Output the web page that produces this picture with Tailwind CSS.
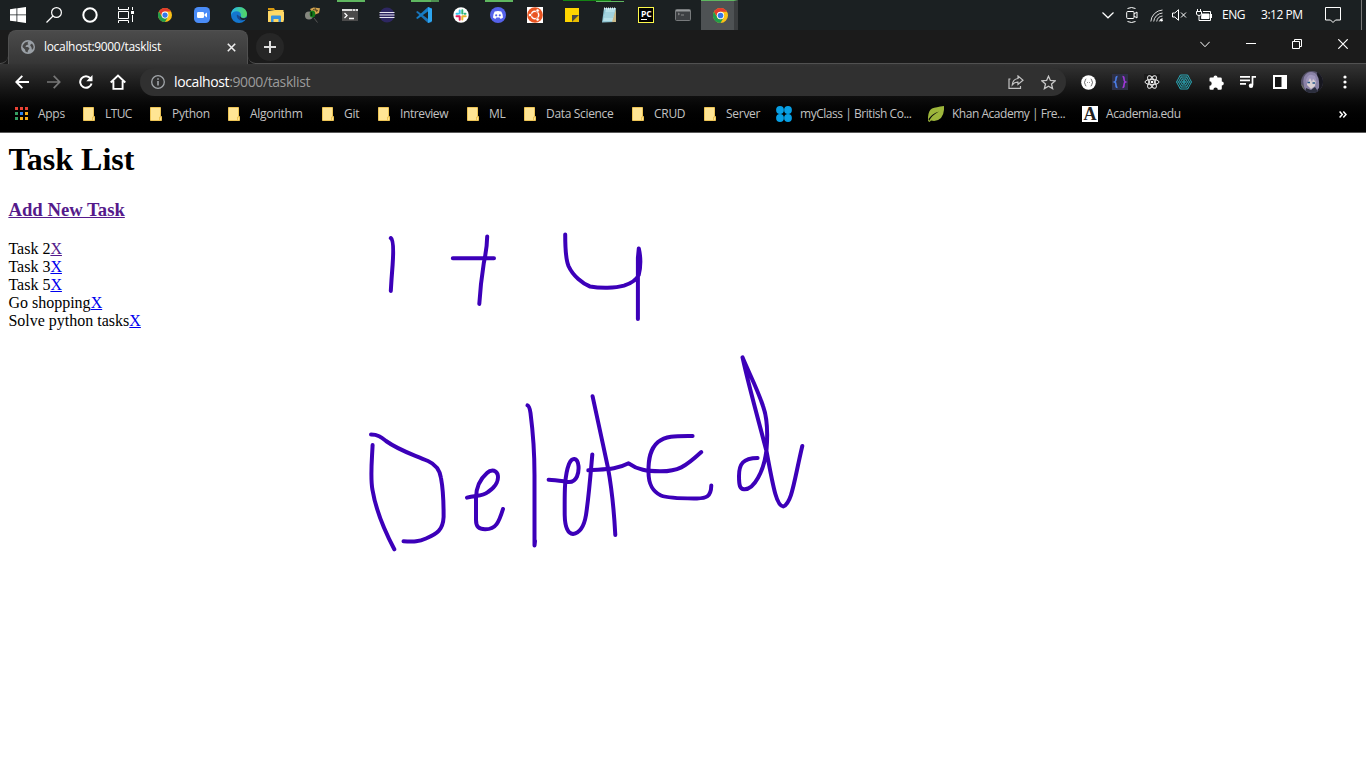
<!DOCTYPE html>
<html lang="en">
<head>
<meta charset="utf-8">
<title>Task List</title>
<script src="https://cdn.jsdelivr.net/npm/@tailwindcss/browser@4"></script>
</head>
<body class="relative flex h-[768px] w-[1366px] flex-col overflow-hidden bg-white font-['Open_Sans',sans-serif] text-xs text-white">

<svg class="hidden">
  <symbol id="folder" viewBox="0 0 12 14"><path d="M.5.500h10V9.500h1v4H.5z" fill="#ffe594" stroke="#edc455"/><path d="M9.500 13v-3h1.500" fill="none" stroke="#edc455"/></symbol>
  <symbol id="chrome" viewBox="0 0 16 16"><circle cx="8" cy="8" r="8" fill="#fbc116"/><path d="M1.070 4A8 8 0 0 1 14.930 4H8A4 4 0 0 0 4.540 10z" fill="#e33b2e"/><path d="M1.070 4A8 8 0 0 0 8 16L11.460 10A4 4 0 0 1 4.540 10z" fill="#219b4b"/><circle cx="8" cy="8" r="3.900" fill="#fff"/><circle cx="8" cy="8" r="3" fill="#3577e8"/></symbol>
</svg>

<!-- Taskbar -->
<header class="flex h-[30px] shrink-0 items-center bg-[#1b2022]">
  <div class="flex w-9 justify-center"><svg width="16" height="16" viewBox="0 0 16 16" fill="#fff"><path d="M0 2.2 6.5 1.3V7.500H0zM7.300 1.200 16 0V7.500H7.300zM0 8.300H6.500V14.600L0 13.700zM7.300 8.300H16V16L7.300 14.800z"/></svg></div>
  <div class="flex w-9 justify-center"><svg width="16" height="16" viewBox="0 0 16 16" fill="none" stroke="#fff" stroke-width="1.2"><circle cx="10.500" cy="5.500" r="4.900"/><path d="M7 9 .5 15.500"/></svg></div>
  <div class="flex w-9 justify-center"><svg width="16" height="16" viewBox="0 0 16 16" fill="none" stroke="#fff" stroke-width="2"><circle cx="8" cy="8" r="6.700"/></svg></div>
  <div class="flex w-9 justify-center"><svg width="16" height="16" viewBox="0 0 16 16" fill="none" stroke="#fff" stroke-width="1"><path d="M.5 0V2.500H10.500V0M.5 16V13.500H10.500V16M.5 4.500H10.500V11.500H.5zM14.500 0V3M14.500 8V15"/><path d="M13 4h3v3h-3z" fill="#fff" stroke="none"/></svg></div>

  <div class="ml-[2.5px] flex w-[37px] justify-center"><svg width="14" height="14"><use href="#chrome"/></svg></div>
  <div class="flex w-[37px] justify-center"><svg width="16" height="16" viewBox="0 0 16 16"><rect width="16" height="16" rx="4.500" fill="#4a8cf7"/><rect x="3" y="5" width="7" height="6" rx="1.300" fill="#fff"/><path d="M10.500 7.300 13 5.500v5L10.500 8.700z" fill="#fff"/></svg></div>
  <div class="flex w-[37px] justify-center"><svg width="16" height="16" viewBox="0 0 16 16"><defs><linearGradient id="edge" x1="0" x2="1"><stop stop-color="#25b5ee"/><stop offset="1" stop-color="#55d95a"/></linearGradient></defs><circle cx="8" cy="8" r="8" fill="#1477cf"/><path d="M0 8C0 3.500 3.500 0 8 0s8 3.300 8 7-3 4.300-5 3.800-1.200-1.300-1-2.800C10 6 8 4.300 5.500 4.300S.8 5.800 0 8z" fill="url(#edge)"/><path d="M6 7.500C5 10 7.500 14 12 13.500L14.500 12C11 13 8.500 11.500 9 9.500z" fill="#174a91"/><path d="M10 8.500c-.7 1.200-.4 2 1 2.500s3.500.3 4.500-1V12l-1.500.8c-3 .6-5.300-.8-5-2.800z" fill="#1b2022"/></svg></div>
  <div class="flex w-[37px] justify-center"><svg width="16" height="14" viewBox="0 0 16 14"><path d="M0 0h6l1 2H0z" fill="#d99a10"/><path d="M0 3 7 2h8.500v12H0z" fill="#ffd55c"/><path d="M0 4h16v8.500H0z" fill="#ffd968"/><path d="M3 14V8.500Q3 7.500 4 7.500h8q1 0 1 1V14h-2.500v-3h-5v3z" fill="#3a93dd"/></svg></div>
  <div class="flex w-[37px] justify-center"><svg width="16" height="16" viewBox="0 0 16 16"><circle cx="4" cy="8.500" r="4" fill="#85877f"/><path d="M5 2 8.500.5l6.500.8-1 4.700-5 2z" fill="#d4a44f"/><path d="m8 2.500 5 1M10 1l2 4" stroke="#46371a" stroke-width=".8"/><ellipse cx="7.500" cy="7" rx="2.800" ry="3.600" fill="#147a1b"/><path d="M6.500 5v4" stroke="#082f0b" stroke-width="1.500"/><path d="m9 11 3.500 4.500" stroke="#555"/></svg></div>
  <div class="relative flex w-[37px] justify-center"><i class="absolute -top-[9px] left-[5px] h-[2px] w-7 bg-[#5fb760]"></i><svg width="16" height="12" viewBox="0 0 16 12"><path d="M0 0h16v12H0z" fill="#4b4b4b"/><path d="M0 0h16v2H0z" fill="#ddd"/><path d="M10 0h1v2h-1zM13 0h1v2h-1z" fill="#888"/><path d="m2.500 4 2.500 2.500L2.500 9M7 9.500h5" fill="none" stroke="#fff" stroke-width="1.300"/></svg></div>
  <div class="flex w-[37px] justify-center"><svg width="16" height="16" viewBox="0 0 16 16"><circle cx="8" cy="8" r="7.500" fill="#2e2762"/><path d="M.5 5.500h15M.5 8h15M.5 10.500h15" stroke="#e8e6f2" stroke-width="1.100"/></svg></div>
  <div class="relative flex w-[37px] justify-center"><i class="absolute -top-[7px] left-[5px] h-[2px] w-7 border-r-8 border-[#4d8f50] bg-[#5fb760]"></i><svg width="16" height="16" viewBox="0 0 16 16"><path d="M0 5 1.500 4 16 15l-4 1z" fill="#1a73b8"/><path d="M0 11 12 0l4 1.500L1.500 12z" fill="#167cc5"/><path d="m12 0 4 1.800v12.400L12 16z" fill="#2da5ef"/></svg></div>
  <div class="flex w-[37px] justify-center"><svg width="16" height="16" viewBox="0 0 16 16" fill="none" stroke-linecap="round" stroke-width="2"><circle cx="8" cy="8" r="7.700" fill="#fff"/><path d="M6.700 3.500v3M3.500 6.700h1.500" stroke="#36c5f0"/><path d="M9.300 3.200v3.300M11.500 6.700h1" stroke="#2eb67d"/><path d="M9.300 9.500v3M9.500 9.300h3.200" stroke="#ecb22e"/><path d="M6.700 9.500v3.200M3.500 9.300h3" stroke="#e01e5a"/></svg></div>
  <div class="relative flex w-[37px] justify-center"><i class="absolute -top-[7px] left-[5px] h-[2px] w-7 bg-[#5fb760]"></i><svg width="16" height="16" viewBox="0 0 16 16"><circle cx="8" cy="8" r="8" fill="#5562ea"/><path d="M4.700 4.500Q8 3.500 11.300 4.500 13 7 13 10.500q-1.200 1.200-2.700 1.300l-.7-1.200H6.400l-.7 1.200Q4.200 11.700 3 10.500 3 7 4.700 4.500z" fill="#fff"/><circle cx="6.200" cy="8.300" r="1.100" fill="#5562ea"/><circle cx="9.800" cy="8.300" r="1.100" fill="#5562ea"/></svg></div>
  <div class="flex w-[37px] justify-center"><svg width="16" height="16" viewBox="0 0 16 16"><path d="M0 0h16v16H0z" fill="#fff"/><circle cx="8" cy="8" r="7.800" fill="#e95420"/><circle cx="8" cy="8" r="3.700" fill="none" stroke="#fff" stroke-width="1.500"/><g fill="#fff" stroke="#e95420" stroke-width=".7"><circle cx="3" cy="8" r="1.700"/><circle cx="10.600" cy="3.500" r="1.700"/><circle cx="10.600" cy="12.500" r="1.700"/></g></svg></div>
  <div class="relative flex w-[37px] justify-center"><i class="absolute -top-2 left-[9.5px] h-px w-12 bg-[#148314]"></i><svg width="14" height="14" viewBox="0 0 14 14"><path d="M0 0h14v7l-7 7H0z" fill="#ffd500"/><path d="M7 7h7l-7 7z" fill="#4a4a45"/><path d="M14 7v7H7z" fill="#e9bd00"/></svg></div>
  <div class="relative flex w-[37px] justify-center"><i class="absolute -top-[6px] left-[5px] h-px w-7 bg-[#5fb760]"></i><svg width="16" height="16" viewBox="0 0 16 16"><path d="M3 1h12l-1 14-13 .5z" fill="#8fc5d3"/><path d="M5 2h9l-2 12H2z" fill="#b6e0e8"/><path d="M15 2v13h-4z" fill="#c9b887"/><path d="M3 1.500h12" stroke="#e8f1f3" stroke-width="2" stroke-dasharray="1 1"/><path d="M4 6h9M4 8h9M3 10h9" stroke="#7bb7c7" stroke-width=".6"/></svg></div>
  <div class="flex w-[37px] justify-center"><div class="flex h-4 w-4 flex-col border border-[#fcf84a] bg-black pt-[2px] pl-[2px] text-[8.5px] leading-[7px] font-bold">PC<i class="mt-[2px] h-px w-[6px] bg-white"></i></div></div>
  <div class="flex w-[37px] justify-center"><svg width="16" height="12" viewBox="0 0 16 12"><rect x=".5" y=".5" width="15" height="11" rx="1" fill="#3d4043" stroke="#777a7c"/><path d="M1 1h14v1.500H1z" fill="#96999b"/><path d="m3 4 1.500 1L3 6M6 6h3" fill="none" stroke="#aaa" stroke-width=".7"/></svg></div>
  <div class="-ml-px flex h-[30px] w-[37px] items-center justify-center border-t border-r-4 border-t-[#5fb760] border-r-[#3a3d3f] bg-[#4e5254] pl-[6px]"><svg width="15" height="15"><use href="#chrome"/></svg></div>

  <div class="ml-auto flex h-[30px] items-center">
    <svg class="mr-[11px]" width="14" height="16" viewBox="0 0 14 16" fill="none" stroke="#fff" stroke-width="1.200"><path d="m1.500 5.500 5.500 5.300 5.500-5.300"/></svg>
    <svg class="mr-[12px]" width="12" height="16" viewBox="0 0 12 16" fill="none" stroke="#fff"><rect x=".7" y="4.500" width="7.300" height="7" rx="1"/><path d="m8 7 3-2v6L8 9M1.500 1.500Q5.500-.5 9.500 1.500M1.500 14.500q4 2 8 0"/></svg>
    <svg class="mr-[8px]" width="14" height="14" viewBox="0 0 14 14" fill="none" stroke="#ddd" stroke-width="1"><path d="M.8 13.500A12.500 12.500 0 0 1 12.500 2M3.700 13.500A9.500 9.500 0 0 1 12.500 5M6.700 13.500a6.500 6.500 0 0 1 5.800-5.500M9.300 13.500a4 4 0 0 1 3.200-3"/><circle cx="11.500" cy="12.200" r="1.300" fill="#fff" stroke="none"/></svg>
    <svg class="mr-[9px]" width="15" height="12" viewBox="0 0 15 12" fill="none" stroke="#fff"><path d="M.5 4v4h2.300L6.500 11.300V.7L2.800 4zM9 3.500l5 5M14 3.500l-5 5"/></svg>
    <svg class="mr-[9px]" width="17" height="13" viewBox="0 0 17 13" fill="none" stroke="#fff"><path d="M1.500 0v3M4.500 0v3M.5 2.500h5V5Q5 6.500 3 6.500 1 6.500.5 5zM3 6.500v5h11.500v-9H7M15.500 5v4"/><path d="M6 5h7v4.500H5.500z" fill="#fff"/></svg>
    <span class="w-[39px] text-xs tracking-[-0.5px] whitespace-nowrap">ENG</span>
    <span class="w-[64px] text-xs tracking-[-0.45px] whitespace-nowrap">3:12 PM</span>
    <svg class="mr-5" width="16" height="16" viewBox="0 0 16 16" fill="none" stroke="#fff"><path d="M.5.5h15v12.500h-5L8 15.500 5.500 13h-5z"/></svg>
    <i class="mr-1 h-[30px] w-px bg-[#777]"></i>
  </div>
</header>

<!-- Tab strip -->
<div class="flex h-[34px] shrink-0 items-stretch bg-[#1b1b1b]">
  <div class="w-2 rounded-br-lg border-b border-[#515151]"></div>
  <div class="flex w-[240px] items-center rounded-t-lg border-x border-t border-[#505050] bg-linear-to-b from-[#4b4b4b] to-[#363636] px-[12px]">
    <svg class="-mt-px" width="14" height="14" viewBox="0 0 14 14"><circle cx="7" cy="7" r="7" fill="#9aa0a6"/><path d="M7.500 1.500 6.500 3l1 1.300L5 5.500 4.500 7H7l1.500 1.500L7 10.500l-.5 2-2-1-.5-2L1.500 7 1.800 5.300 4 2.500zM9 5l2-1.500L12.500 6v2L11 10 10.500 7.500z" fill="#464646"/></svg>
    <span class="-mt-px ml-[9px] flex-1 text-xs tracking-[-0.32px] whitespace-nowrap">localhost:9000/tasklist</span>
    <svg class="-mt-px -mr-px" width="9" height="9" viewBox="0 0 9 9" stroke="#eee" stroke-width="1.600"><path d="m.8.8 7.400 7.400M8.200.8.800 8.200"/></svg>
  </div>
  <div class="flex flex-1 items-center rounded-bl-lg border-b border-[#515151] pl-2">
    <div class="flex h-7 w-7 items-center justify-center rounded-full bg-[#262626]"><svg width="12" height="12" viewBox="0 0 12 12" stroke="#dedede" stroke-width="2"><path d="M6 0v12M0 6h12"/></svg></div>
    <div class="mr-[18px] mb-[5px] ml-auto flex items-center">
      <svg class="mr-[36px]" width="10" height="7" viewBox="0 0 10 7" fill="none" stroke="#fff"><path d="m.3.8 4.700 4.900L9.700.8"/></svg>
      <svg class="mr-[36px]" width="10" height="2" viewBox="0 0 10 2"><path d="M0 0h10v1H0z" fill="#fff"/></svg>
      <svg class="mr-[36px]" width="10" height="10" viewBox="0 0 10 10" fill="none" stroke="#fff"><path d="M.5 2.500h7v7h-7zM2.500 2.500v-2h7v7h-2"/></svg>
      <svg width="10" height="10" viewBox="0 0 10 10" stroke="#fff" stroke-width="1.200"><path d="m.3.3 9.400 9.400M9.700.3.300 9.700"/></svg>
    </div>
  </div>
</div>

<!-- Toolbar and bookmarks -->
<div class="flex h-[69px] shrink-0 flex-col border-b border-[#5a5a5a] bg-linear-to-b from-[#343434] via-[#0d0d0d] to-black">
  <div class="flex h-9 items-center">
    <svg class="ml-[15px]" width="14" height="14" viewBox="0 0 14 14" fill="none" stroke="#fff" stroke-width="1.900"><path d="M14 7H1.500M7.300.9 1.300 7l6 6.100"/></svg>
    <svg class="ml-[18px]" width="14" height="14" viewBox="0 0 14 14" fill="none" stroke="#777" stroke-width="1.700"><path d="M0 7h12.500M6.700.9l6 6.100-6 6.100"/></svg>
    <svg class="ml-[18px]" width="14" height="14" viewBox="0 0 14 14" fill="none" stroke="#fff" stroke-width="2"><path d="M11.500 3.300A5.800 5.800 0 1 0 12.600 8.500"/><path d="M13.500 0v6.300H7.300z" fill="#fff" stroke="none"/></svg>
    <svg class="ml-[17px]" width="16" height="16" viewBox="0 0 16 16" fill="none" stroke="#fff" stroke-width="1.900"><path d="M.7 8.500 8 1.500l7.300 7M3.400 7v7.900h9.200V7"/></svg>
    <div class="ml-[14px] flex h-7 w-[926px] items-center rounded-full bg-[#303030] pl-[11px]">
      <svg width="14" height="14" viewBox="0 0 14 14" fill="none" stroke="#a2a6aa" stroke-width="1.300"><circle cx="7" cy="7" r="6.300"/><path d="M7 6v4.500M7 3.200v1.600" stroke-width="1.600"/></svg>
      <span class="ml-[9px] text-[14px] leading-5 tracking-[-0.39px] whitespace-nowrap">localhost<span class="text-[#9b9b9b]">:9000/tasklist</span></span>
      <svg class="mr-[17px] ml-auto" width="16" height="14" viewBox="0 0 16 14" fill="none" stroke="#c3c3c3" stroke-width="1.200"><path d="M2.500 4H1v9.400h11.500V11M10 .9 15 5.200 10 9.500V7.200Q6.500 7 4.300 9.800 4.800 4 10 3.500z"/></svg>
      <svg class="mr-[10px]" width="15" height="15" viewBox="0 0 15 15" fill="none" stroke="#c8c8c8" stroke-width="1.300"><path d="m7.500 1.200 1.900 4.300 4.700.4-3.600 3.100 1.100 4.600-4.100-2.400-4.100 2.400L4.500 9 .9 5.900l4.700-.4z"/></svg>
    </div>
    <svg class="ml-[15px]" width="15" height="15" viewBox="0 0 15 15"><circle cx="7.500" cy="7.500" r="7.300" fill="#fff"/><path d="M5.300 4Q4.200 4 4.200 5.500T3 7.500q1.200.5 1.200 2T5.300 11M9.700 4q1.100 0 1.100 1.500t1.200 2q-1.200.5-1.200 2T9.700 11" fill="none" stroke="#555" stroke-width=".9"/><path d="M6 7.200h.8v.8H6zM8.200 7.200H9v.8h-.8z" fill="#555"/></svg>
    <svg class="ml-[16px]" width="16" height="16" viewBox="0 0 16 16" fill="none" stroke-width="1.600"><path d="M0 0h16v16H0z" fill="#2d3047"/><path d="M5.500 2.500Q4 2.500 4 5T2.700 8Q4 8.500 4 11t1.500 2.500" stroke="#4b7ee8"/><path d="M10.500 2.500Q12 2.500 12 5t1.300 3Q12 8.500 12 11t-1.500 2.500" stroke="#a238dc"/></svg>
    <svg class="ml-[16px]" width="16" height="16" viewBox="0 0 16 16" fill="none" stroke="#eee" stroke-width="1"><path d="M0 0h16v16H0z" fill="#1b1b1b" stroke="none"/><ellipse cx="8" cy="8" rx="7" ry="2.700"/><ellipse cx="8" cy="8" rx="7" ry="2.700" transform="rotate(60 8 8)"/><ellipse cx="8" cy="8" rx="7" ry="2.700" transform="rotate(120 8 8)"/><circle cx="8" cy="8" r="1.300" fill="#fff" stroke="none"/></svg>
    <svg class="ml-[16px]" width="16" height="16" viewBox="0 0 16 16" fill="none" stroke="#2ba6b4" stroke-width="1"><path d="M4.300 1h7.400L15.500 8l-3.800 7H4.300L.5 8zM5.200 3h5.600l2.700 5-2.700 5H5.200L2.500 8zM6.200 5h3.600l1.700 3-1.700 3H6.200L4.500 8z"/><path d="m4.300 1 7.400 14M11.700 1 4.300 15M.5 8h15" stroke-width=".5"/><circle cx="8" cy="8" r="1.300"/></svg>
    <svg class="ml-[17px]" width="15" height="15" viewBox="0 0 15 15" fill="#fff"><path d="M4.500 2.500a2 2 0 0 1 4 0h3q1.300 0 1.300 1.300v2.700a2 2 0 0 1 0 4v3q0 1.300-1.300 1.300H8.800a2.200 2.200 0 0 0-4.400 0H1.800Q.5 14.800.5 13.500v-2.800a2.200 2.200 0 0 0 0-4.400V3.800q0-1.300 1.300-1.300z"/></svg>
    <svg class="ml-[16px]" width="16" height="14" viewBox="0 0 16 14" fill="none" stroke="#fff" stroke-width="1.700"><path d="M0 1.800h10M0 5.300h10M0 8.800h6M16 1.800h-3.500v8.500"/><circle cx="11" cy="10.800" r="2.200" fill="#fff" stroke="none"/></svg>
    <svg class="ml-[17px]" width="14" height="14" viewBox="0 0 14 14"><path d="M0 0h14v14H0z" fill="#fff"/><path d="M2 2h6.500v10H2z" fill="#161616"/></svg>
    <svg class="ml-[14px]" width="22" height="22" viewBox="0 0 22 22"><defs><clipPath id="av"><circle cx="11" cy="11" r="11"/></clipPath></defs><g clip-path="url(#av)"><path d="M0 0h22v22H0z" fill="#56526a"/><path d="M16 0h6v22h-5z" fill="#17171f"/><path d="M3 6Q7-1 14 2q5 4 4 15l-4 4-9-1Q1 14 3 6z" fill="#8a82a6"/><path d="M6 8q5-4 9 1l-1 6-4 3-4-4z" fill="#d9cfd1"/><path d="M5 9q2-6 6-5l3 1 2 7-4-4-1 3-2-4-3 6z" fill="#a097bd"/><path d="M6.500 11.500h2.500M11.500 12h2.500" stroke="#27598a" stroke-width="1.700"/><path d="m5 17 5 2 4-3 4 6H4z" fill="#2b2e3d"/><path d="M0 13q3 1 4 9H0z" fill="#6e7462"/></g></svg>
    <svg class="ml-[20px]" width="4" height="14" viewBox="0 0 4 14" fill="#fff"><circle cx="2" cy="2" r="1.600"/><circle cx="2" cy="7" r="1.600"/><circle cx="2" cy="12" r="1.600"/></svg>
  </div>
  <nav class="flex h-[28px] items-center pl-[15px] text-xs tracking-[-0.28px] whitespace-nowrap text-[#c2c2c2]">
    <div class="flex w-[68px] items-center gap-[10px]"><svg width="13" height="14" viewBox="0 0 13 14"><path d="M0 0h3v3H0zM5 0h3v3H5zM10 0h3v3h-3z" fill="#ea4335"/><path d="M0 5h3v3H0zM0 10h3v3H0z" fill="#34a063"/><path d="M5 5h3v3H5z" fill="#2b85f0"/><path d="M10 5h3v3h-3zM5 10h3v3H5zM10 10h3v3h-3z" fill="#f5ae18"/></svg><span>Apps</span></div>
    <div class="flex w-[67px] items-center gap-[10px]"><svg width="12" height="14"><use href="#folder"/></svg><span class="tracking-[-0.6px]">LTUC</span></div>
    <div class="flex w-[78px] items-center gap-[10px]"><svg width="12" height="14"><use href="#folder"/></svg><span>Python</span></div>
    <div class="flex w-[94px] items-center gap-[10px]"><svg width="12" height="14"><use href="#folder"/></svg><span>Algorithm</span></div>
    <div class="flex w-[56px] items-center gap-[10px]"><svg width="12" height="14"><use href="#folder"/></svg><span>Git</span></div>
    <div class="flex w-[89px] items-center gap-[10px]"><svg width="12" height="14"><use href="#folder"/></svg><span class="tracking-[-0.4px]">Intreview</span></div>
    <div class="flex w-[57px] items-center gap-[10px]"><svg width="12" height="14"><use href="#folder"/></svg><span>ML</span></div>
    <div class="flex w-[108px] items-center gap-[10px]"><svg width="12" height="14"><use href="#folder"/></svg><span class="tracking-[-0.33px]">Data Science</span></div>
    <div class="flex w-[72px] items-center gap-[10px]"><svg width="12" height="14"><use href="#folder"/></svg><span>CRUD</span></div>
    <div class="flex w-[72px] items-center gap-[10px]"><svg width="12" height="14"><use href="#folder"/></svg><span>Server</span></div>
    <div class="flex w-[152px] items-center gap-2"><svg width="16" height="16" viewBox="0 0 16 16" fill="#079fe4"><circle cx="4" cy="4" r="3.900"/><circle cx="12" cy="4" r="3.900"/><circle cx="4" cy="12" r="3.900"/><circle cx="12" cy="12" r="3.900"/></svg><span class="tracking-[-0.46px]">myClass | British Co...</span></div>
    <div class="flex w-[154px] items-center gap-2"><svg width="16" height="16" viewBox="0 0 16 16"><path d="M0 15Q-.5 5 4 2.500 8 1 16 0q.5 8-3 12-4 4-10 2.500L1.500 16z" fill="#9db63b"/><path d="M1 15Q4 9 11 5.500 4 7.500.5 13z" fill="#0b0b0b"/></svg><span class="tracking-[-0.48px]">Khan Academy | Fre...</span></div>
    <div class="flex items-center gap-2"><span class="flex h-4 w-4 items-center justify-center bg-white font-['Liberation_Serif',serif] text-lg leading-4 font-bold tracking-normal text-[#222]">A</span><span class="tracking-[-0.4px]">Academia.edu</span></div>
    <svg class="mr-[19px] ml-auto" width="8" height="7" viewBox="0 0 8 7" fill="none" stroke="#fff" stroke-width="1.500"><path d="M.6.500 3.300 3.500.6 6.500M4.300.5 7 3.500 4.300 6.500"/></svg>
  </nav>
</div>

<!-- Page -->
<main class="relative flex-1 px-[8.4px] font-['Liberation_Serif',serif] text-base leading-[18px] text-black">
  <h1 class="pt-2 text-[32px] leading-9 font-bold">Task List</h1>
  <h3 class="pt-[22px] text-[18.72px] leading-[21px] font-bold"><a class="text-[#551a8b] underline">Add New Task</a></h3>
  <ul class="pt-5">
    <li>Task 2<a class="text-[#551a8b] underline">X</a></li>
    <li>Task 3<a class="text-[#0000ee] underline">X</a></li>
    <li>Task 5<a class="text-[#0000ee] underline">X</a></li>
    <li>Go shopping<a class="text-[#0000ee] underline">X</a></li>
    <li>Solve python tasks<a class="text-[#0000ee] underline">X</a></li>
  </ul>
  <!-- Pen annotation laid over the page -->
  <svg class="absolute top-0 left-0" width="1366" height="635" viewBox="0 133 1366 635" fill="none" stroke="#3c00b9" stroke-width="4" stroke-linecap="round" stroke-linejoin="round">
    <path d="M390.800 238C393.800 240 393.300 255 392.600 265 391.800 275 391.300 282 390.800 291"/>
    <path d="M452.800 258.200H494M487.200 236.500C487 248 485.300 256 483.800 263 481.300 279 480 292 479.300 304"/>
    <path d="M565.200 234.500C565.200 248 566 260 568.500 266 573 276 583 284 590 286.500 600 288.300 615 288.300 624 285.700 632 283 637 279 638.700 275 641 266 640.500 256 638.800 248.500L637.900 258V319M639 250V272"/>
    <path d="M371 434.500C378 434.500 381 437 386 441 400 451 412 454 428 461 437 465 440 471 441 478 443.800 493 443.600 507 443.600 517 443 530 437 534 426 538.500 417 542.500 412 541.500 403.500 541.300"/>
    <path d="M372.600 445C372 460 370 477 372.500 490 375 505 381 524 394.300 549.300"/>
    <path d="M467 497.600C476 495 482 497 488 492 497 486 499 479 497.500 474 495 469 490 470 487 473 479 480 476 488 476 498V520C476 527 479 529.300 485 529.300 496 529.500 499 522 503 509"/>
    <path d="M527.500 405.300Q529.500 406 530.500 413C534 440 534.500 455 534.500 475V545.500L535 541"/>
    <path d="M548.600 479.800C557 480 564 481.500 569 482 577 482 579 473 578.500 466 577.500 457 572 457 569 464 564 477 564.700 495 564.700 515 565 529 568 533.500 573 534 580 533 584 527 586 515 589 495 590.500 475 592.300 454.500"/>
    <path d="M592.600 396.300C598 422 603 444 608 468 612 490 614 510 615.300 535"/>
    <path d="M588.300 470.300C604 469 616 470 628.600 463.300 638 470 647 471.300 660 471.300 678 471.500 685 467 701.300 452"/>
    <path d="M692.600 436C676 436 666 435.500 658 442 650 449 648.300 459 648.500 472 648.500 484 652 491 661 495.500 668 498.300 682 498.500 697 498.400 706 498.400 711 497 711.300 485.500"/>
    <path d="M757.600 458C743 458 739 464 739 476 739 486 740 489 744 489.300 754 490 764 471 766.500 450 768 432 767 417 763 406 757 388 749 373 742.500 357.300 750 391 759 422 766.600 451.600 774 492 777 506 783.300 506.500 792 503 794 481 802.300 446"/>
  </svg>
</main>
</body>
</html>
